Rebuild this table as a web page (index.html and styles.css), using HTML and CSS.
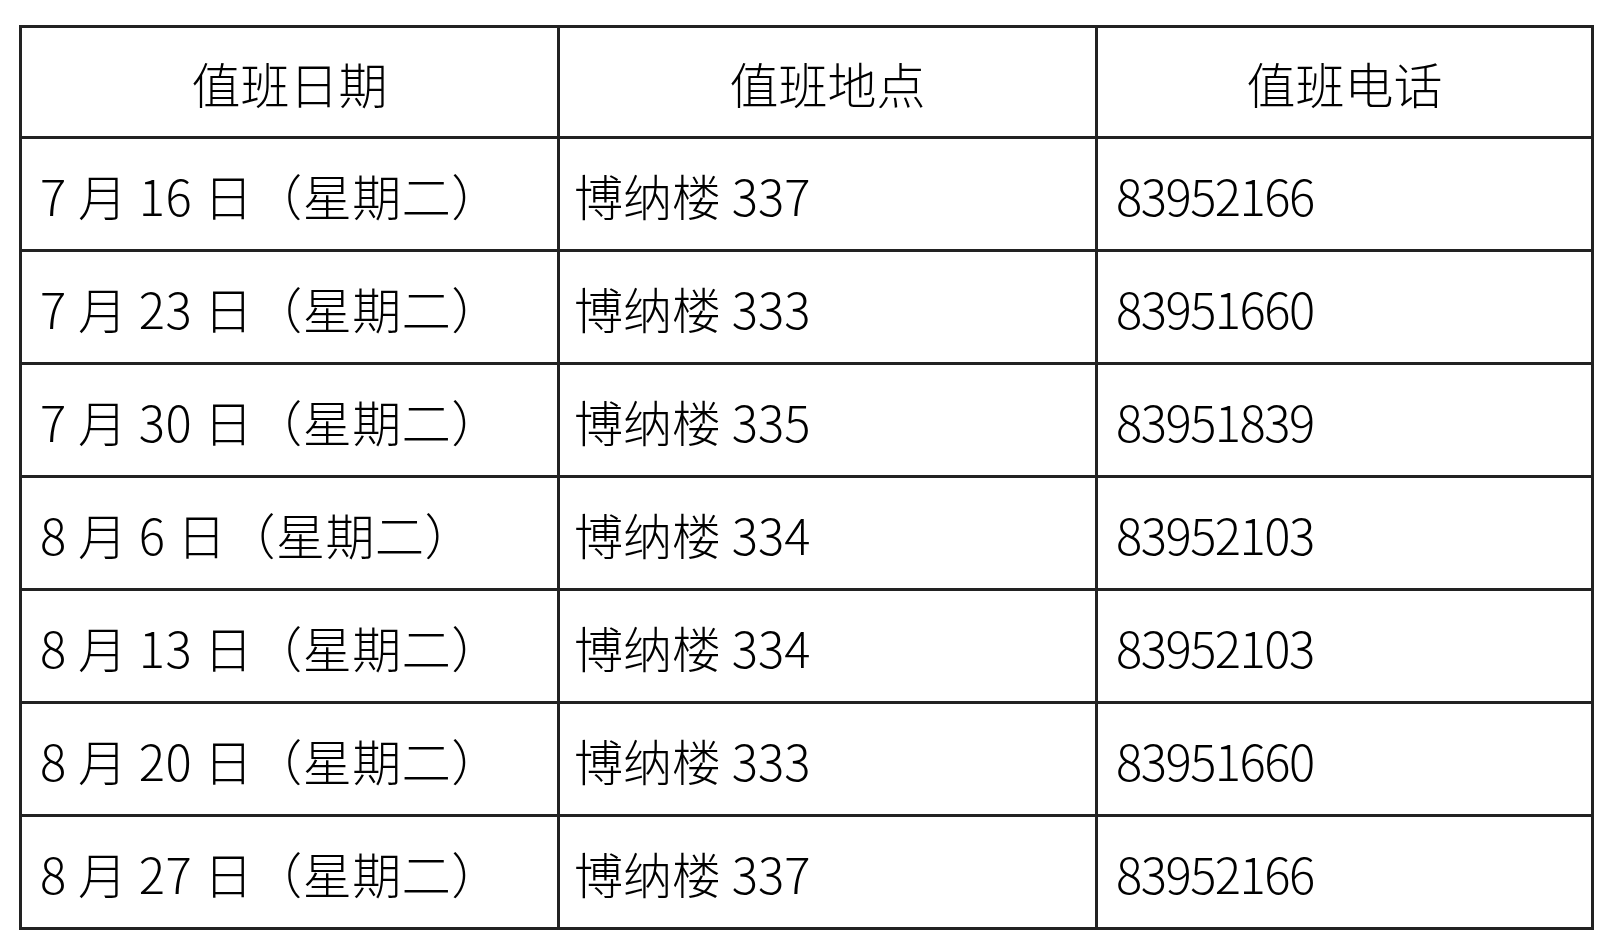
FILE: index.html
```html
<!DOCTYPE html>
<html lang="zh-CN">
<head>
<meta charset="utf-8">
<title>值班安排</title>
<link rel="stylesheet" href="styles.css">
</head>
<body>
<table class="duty">
  <colgroup>
    <col class="c-date">
    <col class="c-place">
    <col class="c-phone">
  </colgroup>
  <thead>
    <tr class="head">
      <th>值班日期</th>
      <th>值班地点</th>
      <th>值班电话</th>
    </tr>
  </thead>
  <tbody>
    <tr><td class="date">7 月 16 日（星期二）</td><td class="place">博纳楼 337</td><td class="phone">83952166</td></tr>
    <tr><td class="date">7 月 23 日（星期二）</td><td class="place">博纳楼 333</td><td class="phone">83951660</td></tr>
    <tr><td class="date">7 月 30 日（星期二）</td><td class="place">博纳楼 335</td><td class="phone">83951839</td></tr>
    <tr><td class="date">8 月 6 日（星期二）</td><td class="place">博纳楼 334</td><td class="phone">83952103</td></tr>
    <tr><td class="date">8 月 13 日（星期二）</td><td class="place">博纳楼 334</td><td class="phone">83952103</td></tr>
    <tr><td class="date">8 月 20 日（星期二）</td><td class="place">博纳楼 333</td><td class="phone">83951660</td></tr>
    <tr><td class="date">8 月 27 日（星期二）</td><td class="place">博纳楼 337</td><td class="phone">83952166</td></tr>
  </tbody>
</table>
</body>
</html>
```
FILE: styles.css
```css
html, body {
  margin: 0;
  padding: 0;
  background: #ffffff;
}

body {
  font-family: "Noto Sans CJK SC", "Noto Sans", sans-serif;
  font-weight: 300;
  color: #000000;
}

.duty {
  margin: 25px 0 0 19px;
  width: 1572px;
  table-layout: fixed;
  border-collapse: collapse;
  border: 3px solid #222222;
  font-size: 49px;
  line-height: 1;
}

.c-date { width: 538px; }
.c-place { width: 538px; }
.c-phone { width: 496px; }

.duty th,
.duty td {
  border: 3px solid #222222;
  padding: 0;
  vertical-align: middle;
  white-space: nowrap;
}

.duty th {
  font-weight: 300;
  text-align: center;
}

.head { height: 111px; }
.duty tbody tr { height: 113px; }

.date {
  padding-left: 18px !important;
  letter-spacing: 0.5px;
}
.place { padding-left: 14px !important; }
.phone {
  padding-left: 18px !important;
  letter-spacing: -1.5px;
}
```
